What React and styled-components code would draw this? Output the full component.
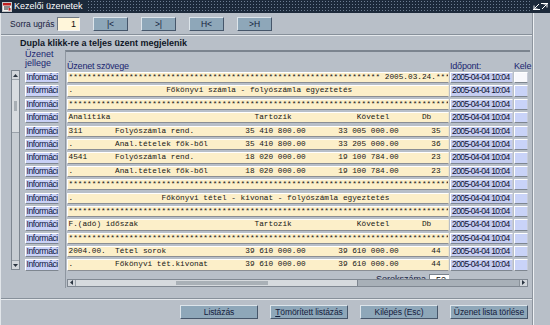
import React from 'react';
import styled, { createGlobalStyle } from 'styled-components';

const GlobalStyle = createGlobalStyle`
  html, body {
    margin: 0;
    padding: 0;
  }
  body {
    width: 550px;
    height: 325px;
    overflow: hidden;
    background: #b8bfc8;
    font-family: 'Liberation Sans', Arial, sans-serif;
  }
`;

const pad = (...parts) => parts.reduce((s, [c, t]) => s.padEnd(c, ' ') + t, '');
const stars = '*'.repeat(82);

const messages = [
  '*'.repeat(67) + ' 2005.03.24.' + '***',
  pad([0, '.'], [21, 'Főkönyvi számla - folyószámla egyeztetés']),
  stars,
  pad([0, 'Analitika'], [40, 'Tartozik'], [62, 'Követel'], [76, 'Db']),
  pad([0, '311'], [10, 'Folyószámla rend.'], [38, '35 410 800.00'], [58, '33 005 000.00'], [78, '35']),
  pad([0, '.'], [10, 'Anal.tételek fők-ből'], [38, '35 410 800.00'], [58, '33 205 000.00'], [78, '36']),
  pad([0, '4541'], [10, 'Folyószámla rend.'], [38, '18 020 000.00'], [58, '19 100 784.00'], [78, '23']),
  pad([0, '.'], [10, 'Anal.tételek fők-ből'], [38, '18 020 000.00'], [58, '19 100 784.00'], [78, '23']),
  stars,
  pad([0, '.'], [20, 'Főkönyvi tétel - kivonat - folyószámla egyeztetés']),
  stars,
  pad([0, 'F.(adó) időszak'], [40, 'Tartozik'], [62, 'Követel'], [76, 'Db']),
  stars,
  pad([0, '2004.00.'], [10, 'Tétel sorok'], [38, '39 610 000.00'], [58, '39 610 000.00'], [78, '44']),
  pad([0, '.'], [10, 'Főkönyvi tét.kivonat'], [38, '39 610 000.00'], [58, '39 610 000.00'], [78, '44']),
];

const COLS = '382px 63px 14px';

const App = () => {
  return (
    <>
      <GlobalStyle />
      <Window>
        <TitleBar>
          <TitleIcon />
          <TitleText>Kezelői üzenetek</TitleText>
          <TitleFill />
          <TitleButtons />
        </TitleBar>
        <Body>
          <Main>
            <Toolbar>
              <Label>Sorra ugrás</Label>
              <JumpInput>1</JumpInput>
              <NavButtons>
                <Button $w={35}>|&lt;</Button>
                <Button $w={35}>&gt;|</Button>
                <Button $w={35}>H&lt;</Button>
                <Button $w={35}>&gt;H</Button>
              </NavButtons>
            </Toolbar>
            <Separator />
            <PanelTitle>Dupla klikk-re a teljes üzent megjelenik</PanelTitle>
            <TableSection>
              <VScroll>
                <ScrollArrow>
                  <svg width="5" height="3" viewBox="0 0 5 3"><path d="M0 3 L2.5 0 L5 3 Z" fill="#2a3440" /></svg>
                </ScrollArrow>
                <VThumb>
                  <VGrip />
                </VThumb>
                <VTrack />
                <ScrollArrow $bottom>
                  <svg width="5" height="3" viewBox="0 0 5 3"><path d="M0 0 L2.5 3 L5 0 Z" fill="#2a3440" /></svg>
                </ScrollArrow>
              </VScroll>
              <InfoCol>
                <InfoHeader>Üzenet<br />jellege</InfoHeader>
                <Rows $cols="34px">
                  {messages.map((_, i) => (
                    <InfoCell key={i}>Információ</InfoCell>
                  ))}
                </Rows>
              </InfoCol>
              <GridBox>
                <GridHeader>
                  <HeadLabel>Üzenet szövege</HeadLabel>
                  <HeadLabel>Időpont:</HeadLabel>
                  <HeadLabel>Kele</HeadLabel>
                </GridHeader>
                <Rows $cols={COLS}>
                  {messages.map((m, i) => (
                    <React.Fragment key={i}>
                      <MsgCell>{m}</MsgCell>
                      <TimeCell>2005-04-04 10:04</TimeCell>
                      <KeleCell $blank={i === 0} />
                    </React.Fragment>
                  ))}
                </Rows>
                <Footer>
                  <FooterLabel>Sorokszáma</FooterLabel>
                  <CountInput>52</CountInput>
                </Footer>
                <HScroll>
                  <HArrow>
                    <svg width="3" height="5" viewBox="0 0 3 5"><path d="M3 0 L0 2.5 L3 5 Z" fill="#2a3440" /></svg>
                  </HArrow>
                  <HThumb>
                    <HGrip />
                  </HThumb>
                  <HTrack />
                  <HArrow>
                    <svg width="3" height="5" viewBox="0 0 3 5"><path d="M0 0 L3 2.5 L0 5 Z" fill="#2a3440" /></svg>
                  </HArrow>
                </HScroll>
              </GridBox>
            </TableSection>
            <Separator $top={10} />
            <ActionRow>
              <Button $w={78}>Listázás</Button>
              <Button $w={78}><u>T</u>ömörített listázás</Button>
              <Button $w={78}>Kilépés (Esc)</Button>
              <Button $w={78}>Üzenet lista törlése</Button>
            </ActionRow>
          </Main>
          <RightStrip />
        </Body>
      </Window>
    </>
  );
};

const TitleIcon = () => (
  <IconBox>
    <svg width="10" height="10" viewBox="0 0 10 10">
      <rect x="0.5" y="0.5" width="9" height="9" fill="#f4f4f4" stroke="#c8c8c8" />
      <rect x="1" y="1" width="8" height="2.5" fill="#c02020" />
      <path d="M2 5 H8 M2 7 H6" stroke="#202020" strokeWidth="1" />
      <rect x="6.5" y="6" width="2" height="2.5" fill="#c02020" />
    </svg>
  </IconBox>
);

const TitleButtons = () => (
  <TitleBtnWrap>
    <svg width="7" height="7" viewBox="0 0 7 7">
      <path d="M6 1 L1.5 5.5 M1 2.5 V6 H4.5 M0 6.5 H7" stroke="#fff" strokeWidth="1" fill="none" />
    </svg>
    <svg width="7" height="7" viewBox="0 0 7 7">
      <path d="M1 6 L5.5 1.5 M2.5 1 H6 V4.5 M0 0.5 H7" stroke="#fff" strokeWidth="1" fill="none" />
    </svg>
  </TitleBtnWrap>
);

const Window = styled.div`
  width: 550px;
  height: 325px;
  display: flex;
  flex-direction: column;
`;

const TitleBar = styled.div`
  height: 13px;
  display: flex;
  align-items: center;
  background-color: #1c293a;
  background-image: radial-gradient(circle, #6d7d92 0.7px, transparent 1px);
  background-size: 3px 3px;
`;

const IconBox = styled.div`
  width: 12px;
  height: 13px;
  display: flex;
  align-items: center;
  justify-content: center;
  background: #1c293a;
  padding-left: 1px;
`;

const TitleText = styled.div`
  color: #ffffff;
  font-size: 9px;
  line-height: 13px;
  background: #1c293a;
  padding: 0 4px 0 1px;
`;

const TitleFill = styled.div`
  flex: 1;
`;

const TitleBtnWrap = styled.div`
  display: flex;
  gap: 1px;
  padding: 0 2px;
  background: #1c293a;
  height: 13px;
  align-items: center;
`;

const Body = styled.div`
  flex: 1;
  display: flex;
`;

const Main = styled.div`
  width: 531px;
  border-left: 1px solid #e2e6ea;
  display: flex;
  flex-direction: column;
`;

const RightStrip = styled.div`
  flex: 1;
  border-left: 1px solid #8c949e;
  box-shadow: inset 1px 0 0 #eef1f4;
`;

const Toolbar = styled.div`
  height: 21px;
  display: flex;
  align-items: center;
  padding-left: 9px;
`;

const Label = styled.div`
  font-size: 8.5px;
  color: #18223e;
  width: 47px;
  flex-shrink: 0;
  white-space: nowrap;
`;

const JumpInput = styled.div`
  width: 23px;
  height: 14px;
  flex-shrink: 0;
  box-sizing: border-box;
  background: #fff6da;
  border: 1px solid;
  border-color: #6f7882 #f4f4f4 #f4f4f4 #6f7882;
  font-size: 9px;
  line-height: 12px;
  text-align: right;
  padding-right: 3px;
  color: #111;
`;

const NavButtons = styled.div`
  display: flex;
  gap: 13px;
  margin-left: 13px;
`;

const Button = styled.div`
  width: ${({ $w }) => $w}px;
  height: 14px;
  flex-shrink: 0;
  box-sizing: border-box;
  background: #8ea7b9;
  border: 1px solid;
  border-color: #dde5eb #46566a #46566a #dde5eb;
  color: #14203c;
  font-size: 8.5px;
  line-height: 12px;
  letter-spacing: -0.1px;
  text-align: center;
  white-space: nowrap;
  overflow: hidden;
`;

const Separator = styled.div`
  height: 0;
  margin-top: ${({ $top }) => $top || 0}px;
  border-top: 1px solid #87909a;
  border-bottom: 1px solid #e4e8ec;
`;

const PanelTitle = styled.div`
  height: 14px;
  line-height: 14px;
  font-size: 9px;
  font-weight: bold;
  color: #0f1626;
  padding-left: 19px;
`;

const TableSection = styled.div`
  height: 238px;
  display: flex;
  padding-left: 10px;
`;

const VScroll = styled.div`
  width: 9px;
  height: 200px;
  margin-top: 20px;
  box-sizing: border-box;
  border: 1px solid #7d8690;
  background: #bfc5cc;
  display: flex;
  flex-direction: column;
`;

const ScrollArrow = styled.div`
  height: 8px;
  display: flex;
  align-items: center;
  justify-content: center;
  background: #d2d6db;
  border-${({ $bottom }) => ($bottom ? 'top' : 'bottom')}: 1px solid #9aa2aa;
`;

const VThumb = styled.div`
  height: 52px;
  background: #d8dce0;
  border-bottom: 1px solid #9aa2aa;
  display: flex;
  align-items: center;
  justify-content: center;
`;

const VGrip = styled.div`
  width: 3px;
  height: 10px;
  background-image: radial-gradient(circle, #8c949c 0.6px, transparent 0.9px);
  background-size: 2px 2px;
`;

const VTrack = styled.div`
  flex: 1;
  background: #c6ccd2;
`;

const InfoCol = styled.div`
  width: 34px;
  margin-left: 5px;
  display: flex;
  flex-direction: column;
`;

const InfoHeader = styled.div`
  height: 22px;
  font-size: 9px;
  line-height: 9px;
  color: #1a2670;
  white-space: nowrap;
`;

const Rows = styled.div`
  display: grid;
  grid-template-columns: ${({ $cols }) => $cols};
  grid-auto-rows: 11.3px;
  row-gap: 2.1px;
  column-gap: 1px;
`;

const Cell = styled.div`
  box-sizing: border-box;
  border: 1px solid;
  border-color: #ffffff #c8ccd8 #7e8690 #ffffff;
  overflow: hidden;
  white-space: pre;
`;

const InfoCell = styled(Cell)`
  background: #c9d1f7;
  color: #0c1440;
  font-size: 8.5px;
  line-height: 9.3px;
  letter-spacing: -0.4px;
  padding-left: 0.5px;
`;

const GridBox = styled.div`
  flex: 1;
  margin-left: 6px;
  margin-right: 2px;
  border-top: 2px solid #7b848f;
  border-left: 1px solid #8e96a0;
  padding: 0 0 1px 1px;
  display: flex;
  flex-direction: column;
`;

const GridHeader = styled.div`
  height: 20px;
  display: grid;
  grid-template-columns: ${COLS};
  column-gap: 1px;
  align-items: end;
`;

const HeadLabel = styled.div`
  font-size: 9px;
  line-height: 9px;
  padding-bottom: 1px;
  color: #1a2670;
  white-space: nowrap;
  letter-spacing: -0.2px;
`;

const MsgCell = styled(Cell)`
  background: #fcefc9;
  border-color: #ffffff #f0e6c8 #8a8e94 #ffffff;
  font-family: 'Liberation Mono', 'Courier New', monospace;
  font-size: 7.75px;
  line-height: 9.3px;
  color: #161616;
  padding-left: 0.5px;
`;

const TimeCell = styled(Cell)`
  background: #c5cdf1;
  color: #0c1030;
  font-size: 8.5px;
  line-height: 9.3px;
  letter-spacing: -0.6px;
  padding-left: 1px;
`;

const KeleCell = styled(Cell)`
  background: ${({ $blank }) => ($blank ? '#f8f8fc' : '#c9d3f8')};
`;

const Footer = styled.div`
  height: 8px;
  overflow: hidden;
  display: flex;
  justify-content: flex-end;
  align-items: flex-start;
  padding-right: 81px;
`;

const FooterLabel = styled.div`
  font-size: 9px;
  line-height: 10px;
  margin-top: 3px;
  margin-right: 3px;
  color: #1a2446;
`;

const CountInput = styled.div`
  width: 20px;
  height: 12px;
  margin-top: 3px;
  box-sizing: border-box;
  background: #ffffff;
  border-top: 1px solid #7a828c;
  border-left: 1px solid #7a828c;
  font-size: 9px;
  line-height: 10px;
  text-align: right;
  padding-right: 3px;
  color: #111;
`;

const HScroll = styled.div`
  height: 8px;
  margin-right: 2px;
  display: flex;
  box-sizing: border-box;
  border: 1px solid #808892;
  background: #a8b0b8;
`;

const HArrow = styled.div`
  width: 7px;
  display: flex;
  align-items: center;
  justify-content: center;
  background: #d2d6db;
`;

const HThumb = styled.div`
  width: 281px;
  background: #d6dade;
  border-left: 1px solid #9aa2aa;
  border-right: 1px solid #7e8690;
  display: flex;
  align-items: center;
  justify-content: center;
`;

const HGrip = styled.div`
  width: 92px;
  height: 4px;
  margin-left: 10px;
  background-image: radial-gradient(circle, #9199a1 0.6px, transparent 0.9px);
  background-size: 2px 2px;
`;

const HTrack = styled.div`
  flex: 1;
  background: #a8b0b8;
  border-right: 1px solid #8a929a;
`;

const ActionRow = styled.div`
  display: flex;
  gap: 12px;
  margin-top: 5px;
  padding-left: 179px;
`;

export default App;
